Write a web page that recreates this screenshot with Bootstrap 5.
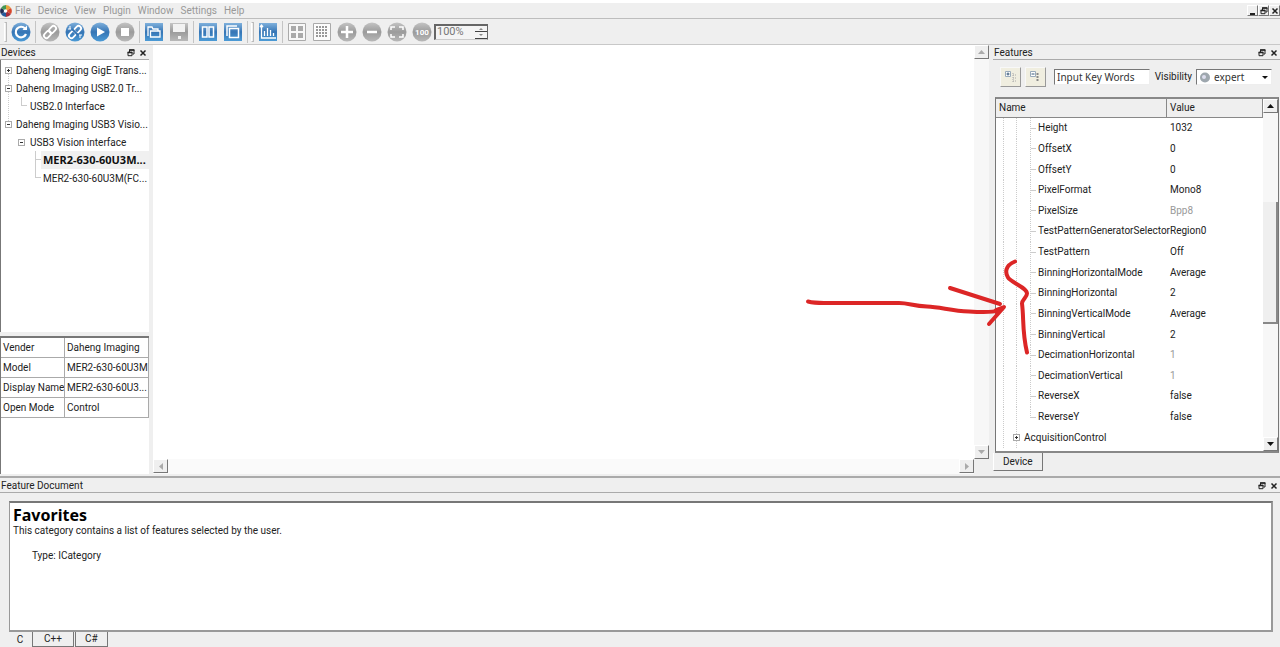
<!DOCTYPE html>
<html lang="en">
<head>
<meta charset="utf-8">
<meta name="viewport" content="width=device-width, initial-scale=1">
<title>Galaxy Viewer</title>
<link href="https://cdn.jsdelivr.net/npm/bootstrap@5.3.0/dist/css/bootstrap.min.css" rel="stylesheet">
<style>
:root{--face:#efefef;--edge:#777;--soft:#bdbdbd}
body{font-family:Roboto,"Noto Sans",sans-serif;font-size:10px;line-height:14px;color:#222;background:var(--face)}
button,input,select{font:inherit;color:inherit;border-radius:0}
button{border:0;background:none;padding:0}
button svg{display:block}
.menubar{height:19px;border-top:3px solid #fff;border-bottom:1px solid var(--soft)}
.menubar a{color:#999;text-decoration:none}
.menubar .menus{gap:7px}
.app-logo{margin-right:-4px}
.toolbar{height:26px;border-bottom:1px solid #c8c8c8;padding-left:2px}
.toolbar button{width:25px;height:22px;display:grid;place-items:center}
.grip{width:3px;height:20px;margin:0 1px 0 2px;border:1px solid #bbb;border-left-color:#fff}
.sep{width:1px;height:22px;margin:0 1px 0 2px;background:#c4c4c4}
.raised{background:var(--face);border:1px solid #fff;border-right-color:#777;border-bottom-color:#777;display:grid;place-items:center}
.winbtn{width:11px;height:11px}
.zoombox{width:54px;height:16px;border:2px solid #666;border-right-width:1px;border-bottom:1px solid #ccc;background:#f4f4f4;color:#777}
.zoombox input{width:36px;border:0;background:none;padding:0 0 0 1px;font-size:11px}
.toolbar .spin button{width:12px;height:7px;border-bottom:1px solid #444}
.dock-title{height:15px;border-bottom:1px solid #aaa;padding:1px 2px 0 1px}
.left-dock{width:149px}
.sunken{background:#fff;border-top:2px solid var(--edge);border-left:1px solid var(--edge)}
.info-pane{height:138px}
.tree-list{list-style:none;margin:0;padding:1px 0 0}
.tree-list li{height:18px;line-height:19px;position:relative;white-space:nowrap}
.tree-list .t1{padding-left:15px}
.tree-list .t2{padding-left:29px}
.tree-list .t3{padding-left:42px}
.tree-list .chosen{font-family:"Noto Sans",sans-serif;font-size:11px;font-weight:700;line-height:18px;color:#111;background:linear-gradient(#f0f0f0,#f0f0f0) 40px 0 no-repeat}
.dev-lines{background:repeating-linear-gradient(#ccc 0 1px,#fff 1px 2px) 7px 8px/1px 56px no-repeat}
.box{position:absolute;top:6px;width:7px;height:7px;border:1px solid #aaa;background:#fff linear-gradient(#333,#333) center/3px 1px no-repeat}
.box.plus{background:linear-gradient(#333,#333) center/3px 1px no-repeat,linear-gradient(#333,#333) center/1px 3px no-repeat,#fff}
.t1 .box{left:4px}.t2 .box{left:17px}
.twig{position:absolute;top:0;width:6px;height:9px;border-left:1px solid #ccc;border-bottom:1px solid #ccc}
.t2 .twig{left:20px}.t3 .twig{left:34px}
.twig.long{height:18px;border-bottom:0;background:linear-gradient(#ccc,#ccc) 0 8px/6px 1px no-repeat}
.info-table{width:148px;border-collapse:separate;border-spacing:0;table-layout:fixed;color:#222}
.info-table td,.info-table th{height:20px;padding:0 0 0 2px;font-weight:400;border:1px solid #aaa;border-top:0;border-left:0;white-space:nowrap;overflow:hidden}
.info-table th{width:64px}
.canvas{background:#fff}
.vbar{width:15px;background:#f7f7f7}
.corner{background:var(--face)}
.hbar{height:15px;background:#fafafa}
.arrowbtn{width:15px;height:14px}
.feat-dock{width:291px;padding-left:4px}
.feat-tools{height:37px;padding:0 8px 3px 7px}
.feat-tools .raised{width:21px;height:20px;background:#f0eee0;border-color:#f8f8f8 #999 #999 #f8f8f8}
.field{height:16px;border:1px solid var(--edge);border-right-color:#eee;border-bottom-color:#eee;background:#fff;padding:0 2px;color:#333}
.search{width:96px}
.feat-tools .field{font-family:"Noto Sans",sans-serif}
.vis select{width:76px;appearance:none;padding-left:17px}
.vis svg{position:absolute;top:3px;pointer-events:none}
.vis .eye{left:3px}
.vis .drop{right:2px}
.feat-frame{min-height:0;border:1px solid var(--edge);border-top:2px solid #888;border-bottom:2px solid #888;background:#fff;margin:0 1px 0 2px}
.feat-rows{padding-bottom:3px}
.feat-table{width:100%;height:100%;border-collapse:separate;border-spacing:0;table-layout:fixed}
.feat-table td,.feat-table th{padding:0 3px;white-space:nowrap;font-weight:400;line-height:14px}
.feat-table thead th{height:19px;background:var(--face);border-right:1px solid #888;border-bottom:1px solid #888}
.feat-table thead th:first-child{width:171px}
.feat-table tbody th{padding:0 0 0 42px;
 --v:repeating-linear-gradient(#ccc 0 1px,#fff 1px 2px);--h:linear-gradient(#ccc,#ccc);
 background:var(--v) 7px 0/1px 100% no-repeat,var(--v) 20px 0/1px 100% no-repeat,var(--v) 34px 0/1px 100% no-repeat,var(--h) 34px 50%/6px 1px no-repeat}
.feat-table tbody .last th{background-size:1px 100%,1px 100%,1px 50%,6px 1px}
.feat-table tbody .group th{padding-left:28px;position:relative;background-size:1px 100%,1px 100%,0 0,0 0}
.group .box{left:17px;top:7px}
.feat-table .muted{color:#999}
.thumb{background:var(--face);border-right:2px solid #888;border-bottom:2px solid #888}
.tabbtn{height:18px;border:1px solid #777;border-top:0;padding:0 9px;background:var(--face)}
.tabbtn.front{min-width:48px;border-left-color:#fff}
.feat-tabs{padding-bottom:3px}
.doc-dock{border-top:2px solid #aaa;margin-top:2px}
.doc-body{height:131px;margin:8px 7px 0 9px;border:2px solid #999;border-left-width:1px;border-top-color:#777;background:#fff;padding:3px}
.doc-body h1{font:700 16px/18px "Noto Sans",sans-serif;color:#000;margin:0}
.doc-type{margin:11px 0 0 19px}
.doc-tabs{gap:1px;padding-left:9px}
.doc-tabs .tabbtn{height:15px;min-width:31px}
.doc-tabs .wide{min-width:42px}
.doc-tabs .plain{min-width:22px;padding:0;border:0}
.notes{position:absolute;right:244px;top:208px;pointer-events:none}
</style>
</head>
<body class="vh-100 d-flex flex-column overflow-hidden">
<svg width="0" height="0" class="position-absolute">
 <defs>
  <linearGradient id="blue" x2="0" y2="1"><stop stop-color="#7fb0dc"/><stop offset=".5" stop-color="#3575b5"/><stop offset="1" stop-color="#4c9bd6"/></linearGradient>
  <linearGradient id="grey" x2="0" y2="1"><stop stop-color="#c4c4c4"/><stop offset=".5" stop-color="#9b9b9b"/><stop offset="1" stop-color="#b8b8b8"/></linearGradient>
  <symbol id="float" viewBox="0 0 8 8"><path d="M2.500 3V1h4.500v4H5.500M1 3.300h4v3.400H1z" fill="none" stroke="#222"/><path d="M2 1h5.500M.5 3.500h5" stroke="#222" stroke-width="1.300"/></symbol>
  <symbol id="close" viewBox="0 0 8 8"><path d="M1.500 1.500l5 5M6.500 1.500l-5 5" stroke="#222" stroke-width="1.500"/></symbol>
  <symbol id="link" viewBox="0 0 20 20"><g fill="none" stroke="#fff" stroke-width="1.800"><rect x="8.500" y="5" width="8" height="5" rx="2.500" transform="rotate(-45 12.500 7.500)"/><rect x="3.500" y="10" width="8" height="5" rx="2.500" transform="rotate(-45 7.500 12.500)"/></g></symbol>
 </defs>
</svg>

<header>
 <nav class="menubar d-flex align-items-center justify-content-between">
  <div class="menus d-flex align-items-center">
   <svg class="app-logo" width="12" height="12" viewBox="0 0 12 12"><path d="M6 6V0a6 6 0 0 1 5 3z" fill="#e8a33c"/><path d="M6 6l5-3a6 6 0 0 1 0 6z" fill="#d9482b"/><path d="M6 6l5 3a6 6 0 0 1-5 3z" fill="#a32c3c"/><path d="M6 6v6a6 6 0 0 1-5-3z" fill="#235a9c"/><path d="M6 6L1 9a6 6 0 0 1 0-6z" fill="#222d55"/><path d="M6 6L1 3a6 6 0 0 1 5-3z" fill="#439855"/><circle cx="5.500" cy="6" r="1.800" fill="#fff"/></svg>
   <a href="#">File</a><a href="#">Device</a><a href="#">View</a><a href="#">Plugin</a><a href="#">Window</a><a href="#">Settings</a><a href="#">Help</a>
  </div>
  <div class="d-flex">
   <button class="raised winbtn" aria-label="Minimize"><svg width="8" height="8"><path d="M1 7h5" stroke="#222" stroke-width="2"/></svg></button>
   <button class="raised winbtn" aria-label="Restore"><svg width="8" height="8"><use href="#float"/></svg></button>
   <button class="raised winbtn" aria-label="Close"><svg width="8" height="8"><use href="#close"/></svg></button>
  </div>
 </nav>
 <div class="toolbar d-flex align-items-center">
  <span class="grip"></span>
  <button aria-label="Refresh"><svg width="20" height="20"><circle cx="10" cy="10" r="9.500" fill="url(#blue)"/><path d="M14 6.500A5.300 5.300 0 1 0 15 12" fill="none" stroke="#fff" stroke-width="2.200"/><path d="M11.500 8h4.500V3.500z" fill="#fff"/></svg></button>
  <span class="sep"></span>
  <button aria-label="Connect"><svg width="20" height="20"><circle cx="10" cy="10" r="9.500" fill="url(#grey)"/><use href="#link"/></svg></button>
  <button aria-label="Disconnect"><svg width="20" height="20"><circle cx="10" cy="10" r="9.500" fill="url(#blue)"/><use href="#link"/><path d="M7 7l6 6" stroke="#3575b5" stroke-width="2"/><path d="M5 4v3M3 7h3M15 13v3M14 13h3" stroke="#fff"/></svg></button>
  <button aria-label="Play"><svg width="20" height="20"><circle cx="10" cy="10" r="9.500" fill="url(#blue)"/><path d="M7 5.500v9l8-4.500z" fill="#fff"/></svg></button>
  <button aria-label="Stop"><svg width="20" height="20"><circle cx="10" cy="10" r="9.500" fill="url(#grey)"/><path d="M6 6h8v8H6z" fill="#fff"/></svg></button>
  <span class="sep"></span>
  <button aria-label="Open"><svg width="18" height="18"><path d="M0 0h18v18H0z" fill="url(#blue)"/><path d="M3 13V4h4l1 2h5v2M5.500 14V8H15v6z" fill="none" stroke="#fff" stroke-width="1.300"/></svg></button>
  <button aria-label="Save"><svg width="18" height="18"><path d="M0 0h18v18H0z" fill="url(#grey)"/><path d="M3 1h12v8H3zM8 13h3v3H8z" fill="#f2f2f2"/></svg></button>
  <span class="sep"></span>
  <button aria-label="Columns"><svg width="18" height="18"><path d="M0 0h18v18H0z" fill="url(#blue)"/><path d="M3.500 4h4.500v10H3.500zM10 4h4.500v10H10z" fill="none" stroke="#fff" stroke-width="1.500"/></svg></button>
  <button aria-label="Cascade"><svg width="18" height="18"><path d="M0 0h18v18H0z" fill="url(#blue)"/><path d="M5.500 5.500h9v9h-9zM3 13V3h10" fill="none" stroke="#fff" stroke-width="1.500"/></svg></button>
  <span class="sep"></span><span class="grip"></span>
  <button aria-label="Histogram"><svg width="18" height="18"><path d="M0 0h18v18H0z" fill="url(#blue)"/><path d="M2.500 2v13H17M5.500 13V8M8.500 13V5M11.500 13V7M14.500 13v-3M1 4l1.500-2L4 4" fill="none" stroke="#fff" stroke-width="1.300"/></svg></button>
  <span class="sep"></span>
  <button aria-label="Grid"><svg width="18" height="18"><path d="M.5.5h17v17H.5z" fill="#f8f8f8" stroke="#aaa"/><path d="M3 3h5v5H3zM10 3h5v5h-5zM3 10h5v5H3zM10 10h5v5h-5z" fill="#aaa"/></svg></button>
  <button aria-label="Fine grid"><svg width="18" height="18"><path d="M.5.5h17v17H.5z" fill="#fcfcfc" stroke="#aaa"/><path d="M3 4h12M3 7h12M3 10h12M3 13h12" stroke="#999" stroke-width="2" stroke-dasharray="2 1"/></svg></button>
  <button aria-label="Zoom in"><svg width="20" height="20"><circle cx="10" cy="10" r="9.500" fill="url(#grey)"/><path d="M10 4v12M4 10h12" stroke="#fff" stroke-width="2.500"/></svg></button>
  <button aria-label="Zoom out"><svg width="20" height="20"><circle cx="10" cy="10" r="9.500" fill="url(#grey)"/><path d="M5 10h10" stroke="#fff" stroke-width="2.500"/></svg></button>
  <button aria-label="Fit"><svg width="20" height="20"><circle cx="10" cy="10" r="9.500" fill="url(#grey)"/><path d="M4 8V5h4M12 5h4v3M16 12v3h-4M8 15H4v-3" fill="none" stroke="#fff" stroke-width="1.500"/></svg></button>
  <button aria-label="Actual size"><svg width="20" height="20"><circle cx="10" cy="10" r="9.500" fill="url(#grey)"/><text x="10" y="13" text-anchor="middle" font-size="8" font-weight="700" fill="#fff">100</text></svg></button>
  <div class="zoombox d-flex align-items-center"><input aria-label="Zoom" value="100%"><div class="spin ms-auto"><button aria-label="Increase"><svg width="5" height="3"><path d="M0 3l2-2 2 2" fill="#888"/></svg></button><button aria-label="Decrease"><svg width="5" height="3"><path d="M0 0l2 2 2-2" fill="#888"/></svg></button></div></div>
 </div>
</header>

<main class="d-flex flex-grow-1 position-relative">
 <aside class="left-dock d-flex flex-column flex-shrink-0">
  <div class="dock-title d-flex align-items-center"><span class="me-auto">Devices</span>
   <button class="me-1" aria-label="Float devices"><svg width="8" height="8"><use href="#float"/></svg></button><button aria-label="Close devices"><svg width="8" height="8"><use href="#close"/></svg></button></div>
  <div class="sunken flex-grow-1 border-top-0">
   <ul class="tree-list dev-lines">
    <li class="t1"><i class="box plus"></i>Daheng Imaging GigE Trans...</li>
    <li class="t1"><i class="box"></i>Daheng Imaging USB2.0 Tr...</li>
    <li class="t2"><i class="twig"></i>USB2.0 Interface</li>
    <li class="t1"><i class="box"></i>Daheng Imaging USB3 Visio...</li>
    <li class="t2"><i class="box"></i>USB3 Vision interface</li>
    <li class="t3 chosen"><i class="twig long"></i>MER2-630-60U3M...</li>
    <li class="t3"><i class="twig"></i>MER2-630-60U3M(FC...</li>
   </ul>
  </div>
  <div class="sunken info-pane mt-1">
   <table class="info-table">
    <tr><th scope="row">Vender</th><td>Daheng Imaging</td></tr>
    <tr><th scope="row">Model</th><td>MER2-630-60U3M</td></tr>
    <tr><th scope="row">Display Name</th><td>MER2-630-60U3...</td></tr>
    <tr><th scope="row">Open Mode</th><td>Control</td></tr>
   </table>
  </div>
 </aside>

 <section class="d-flex flex-column flex-grow-1 ms-1">
  <div class="d-flex flex-grow-1">
   <div class="canvas flex-grow-1"></div>
   <div class="vbar d-flex flex-column justify-content-between">
    <button class="raised arrowbtn" aria-label="Scroll up"><svg width="7" height="4"><path d="M0 4l3.500-4L7 4z" fill="#aaa"/></svg></button>
    <button class="raised arrowbtn" aria-label="Scroll down"><svg width="7" height="4"><path d="M0 0l3.500 4L7 0z" fill="#aaa"/></svg></button>
   </div>
  </div>
  <div class="d-flex">
   <div class="hbar flex-grow-1 d-flex justify-content-between">
    <button class="raised arrowbtn" aria-label="Scroll left"><svg width="4" height="7"><path d="M4 0L0 3.500 4 7z" fill="#aaa"/></svg></button>
    <button class="raised arrowbtn" aria-label="Scroll right"><svg width="4" height="7"><path d="M0 0l4 3.500L0 7z" fill="#aaa"/></svg></button>
   </div>
   <div class="vbar corner"></div>
  </div>
 </section>

 <aside class="feat-dock d-flex flex-column flex-shrink-0">
  <div class="dock-title d-flex align-items-center"><span class="me-auto">Features</span>
   <button class="me-1" aria-label="Float features"><svg width="8" height="8"><use href="#float"/></svg></button><button aria-label="Close features"><svg width="8" height="8"><use href="#close"/></svg></button></div>
  <div class="feat-tools d-flex align-items-center">
   <button class="raised" aria-label="Expand all"><svg width="14" height="14"><path d="M1.500 1.500h5v5h-5z" fill="#fff" stroke="#9ab"/><path d="M2.500 4h3M4 2.500v3" stroke="#357"/><path d="M9 3v9M9 5h3M9 8h3M9 11h3" stroke="#aaa" stroke-dasharray="1 1"/></svg></button>
   <button class="raised ms-1" aria-label="Collapse all"><svg width="14" height="14"><path d="M1.500 1.500h5v5h-5z" fill="#fff" stroke="#9ab"/><path d="M2.500 4h3" stroke="#357"/><path d="M8.500 3v9" stroke="#888" stroke-width="2" stroke-dasharray="2 1"/></svg></button>
   <input class="field search ms-2" aria-label="Search features" value="Input Key Words">
   <label for="vis" class="ms-auto me-1">Visibility</label>
   <div class="vis position-relative d-flex">
    <svg class="eye" width="12" height="11"><circle cx="6" cy="5.500" r="5" fill="#9ea7ae"/><circle cx="5" cy="5" r="2" fill="#dde"/></svg>
    <select id="vis" class="field"><option>expert</option></select>
    <svg class="drop" width="9" height="10"><path d="M1 4h6l-3 3z" fill="#111"/></svg>
   </div>
  </div>
  <div class="feat-frame d-flex flex-grow-1">
   <div class="feat-rows flex-grow-1">
    <table class="feat-table">
     <thead><tr><th>Name</th><th>Value</th></tr></thead>
     <tbody>
      <tr><th>Height</th><td>1032</td></tr>
      <tr><th>OffsetX</th><td>0</td></tr>
      <tr><th>OffsetY</th><td>0</td></tr>
      <tr><th>PixelFormat</th><td>Mono8</td></tr>
      <tr><th>PixelSize</th><td class="muted">Bpp8</td></tr>
      <tr><th>TestPatternGeneratorSelector</th><td>Region0</td></tr>
      <tr><th>TestPattern</th><td>Off</td></tr>
      <tr><th>BinningHorizontalMode</th><td>Average</td></tr>
      <tr><th>BinningHorizontal</th><td>2</td></tr>
      <tr><th>BinningVerticalMode</th><td>Average</td></tr>
      <tr><th>BinningVertical</th><td>2</td></tr>
      <tr><th>DecimationHorizontal</th><td class="muted">1</td></tr>
      <tr><th>DecimationVertical</th><td class="muted">1</td></tr>
      <tr><th>ReverseX</th><td>false</td></tr>
      <tr class="last"><th>ReverseY</th><td>false</td></tr>
      <tr class="group"><th><i class="box plus"></i>AcquisitionControl</th><td></td></tr>
     </tbody>
    </table>
   </div>
   <div class="vbar d-flex flex-column flex-shrink-0">
    <button class="raised arrowbtn" aria-label="Scroll features up"><svg width="7" height="4"><path d="M0 4l3.500-4L7 4z" fill="#111"/></svg></button>
    <div class="flex-grow-1 d-flex flex-column"><div style="flex:90"></div><div class="thumb" style="flex:120"></div><div style="flex:114"></div></div>
    <button class="raised arrowbtn" aria-label="Scroll features down"><svg width="7" height="4"><path d="M0 0l3.500 4L7 0z" fill="#111"/></svg></button>
   </div>
  </div>
  <div class="feat-tabs d-flex"><button class="tabbtn front">Device</button></div>
 </aside>

 <svg class="notes" width="236" height="105" viewBox="800 253 236 105" fill="none" stroke="#dc2626" stroke-width="4" stroke-linecap="round" stroke-linejoin="round">
  <path d="M808 301.500c6 1.500 9 1.500 16 1.500h75c10 0 14 3 28 3.500 14 .5 24 4.500 42 5 16 1 24 1 29-1M950 288l50 16M989 324l15-17-8 3"/>
  <path d="M1015 261.500c-10 4-10 11-7 16s19 10 19 16c0 4-5 6-5 10 2 15 0 28 5 49"/>
 </svg>
</main>

<footer class="doc-dock">
 <div class="dock-title d-flex align-items-center"><span class="me-auto">Feature Document</span>
  <button class="me-1" aria-label="Float document"><svg width="8" height="8"><use href="#float"/></svg></button><button aria-label="Close document"><svg width="8" height="8"><use href="#close"/></svg></button></div>
 <div class="doc-body">
  <h1>Favorites</h1>
  <p class="mb-0">This category contains a list of features selected by the user.</p>
  <p class="doc-type">Type: ICategory</p>
 </div>
 <div class="doc-tabs d-flex"><button class="tabbtn plain">C</button><button class="tabbtn wide">C++</button><button class="tabbtn">C#</button></div>
</footer>
<script src="https://cdn.jsdelivr.net/npm/bootstrap@5.3.0/dist/js/bootstrap.bundle.min.js"></script>
</body>
</html>
